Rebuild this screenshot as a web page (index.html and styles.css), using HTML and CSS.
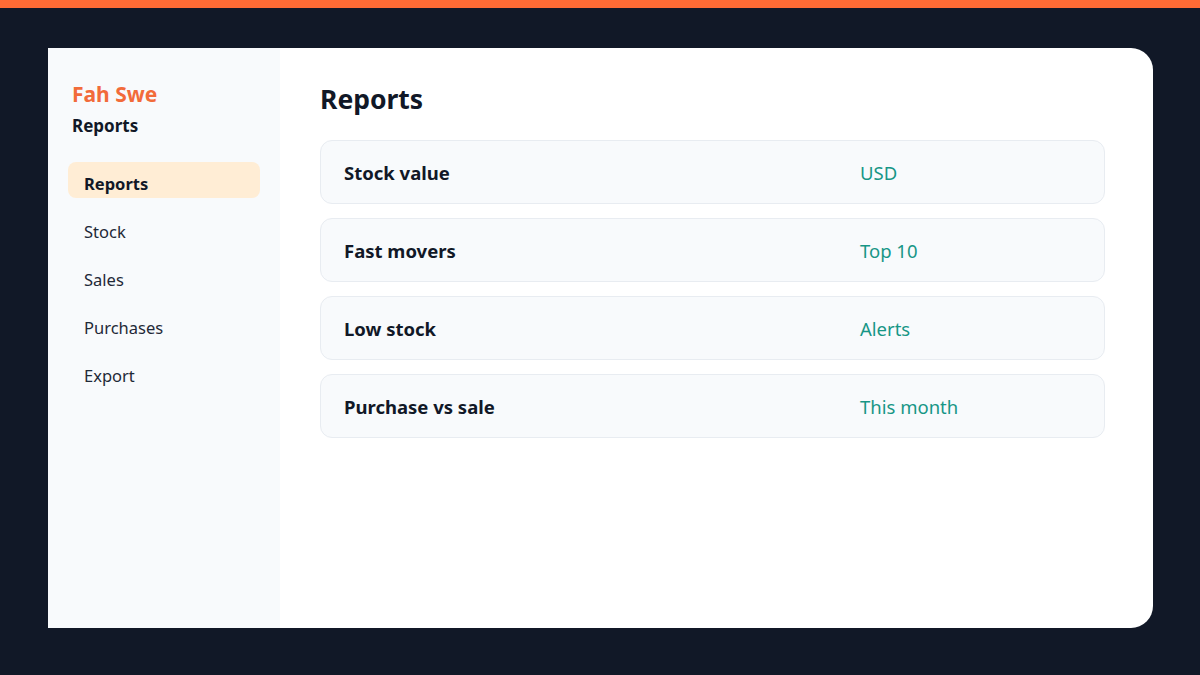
FILE: index.html
```html
<!DOCTYPE html>
<html lang="en">
<head>
    <meta charset="UTF-8">
    <meta name="viewport" content="width=device-width, initial-scale=1.0">
    <title>Reports - Fah Swe</title>
    <link rel="stylesheet" href="styles.css">
</head>
<body>
    <div class="topbar"></div>

    <div class="shell">
        <div class="app">
            <aside class="sidebar">
                <div class="brand">Fah Swe</div>
                <div class="section">Reports</div>

                <nav class="nav">
                    <a href="#" class="nav-item active">Reports</a>
                    <a href="#" class="nav-item">Stock</a>
                    <a href="#" class="nav-item">Sales</a>
                    <a href="#" class="nav-item">Purchases</a>
                    <a href="#" class="nav-item">Export</a>
                </nav>
            </aside>

            <main class="main">
                <h1>Reports</h1>

                <div class="report-list">
                    <div class="report">
                        <span class="report-name">Stock value</span>
                        <span class="report-meta">USD</span>
                    </div>
                    <div class="report">
                        <span class="report-name">Fast movers</span>
                        <span class="report-meta">Top 10</span>
                    </div>
                    <div class="report">
                        <span class="report-name">Low stock</span>
                        <span class="report-meta">Alerts</span>
                    </div>
                    <div class="report">
                        <span class="report-name">Purchase vs sale</span>
                        <span class="report-meta">This month</span>
                    </div>
                </div>
            </main>
        </div>
    </div>
</body>
</html>
```

FILE: styles.css
```css
* { box-sizing: border-box; }

html, body { height: 100%; }

body {
    margin: 0;
    background: #111827;
    font-family: "Noto Sans", "Open Sans", sans-serif;
    color: #111827;
}

.topbar {
    height: 8px;
    background: #ff6b35;
}

.shell {
    padding: 40px 47px 47px 48px;
}

.app {
    display: flex;
    height: 580px;
    background: white;
    border-radius: 0 22px 22px 0;
}

/* sidebar */
.sidebar {
    width: 232px;
    flex-shrink: 0;
    background: #f8fafc;
    padding: 30px 20px;
}
.brand {
    padding-left: 4px;
    color: #f26b3a;
    font-size: 21px;
    font-weight: 700;
    line-height: 32px;
}
.section {
    padding-left: 4px;
    padding-top: 1px;
    font-size: 17px;
    font-weight: 700;
    line-height: 30px;
}
.nav {
    display: flex;
    flex-direction: column;
    gap: 12px;
    margin-top: 21px;
}
.nav-item {
    display: block;
    height: 36px;
    line-height: 30px;
    padding: 7px 16px 0;
    border-radius: 8px;
    color: #1f2937;
    font-size: 16.5px;
    text-decoration: none;
}
.nav-item.active {
    background: #ffedd5;
    color: #111827;
    font-weight: 700;
}

/* main area */
.main {
    flex: 1;
    padding: 31px 48px 40px 40px;
}
.main h1 {
    margin: 0 0 21px;
    font-size: 26.5px;
    line-height: 40px;
    font-weight: 700;
}
.report-list {
    display: flex;
    flex-direction: column;
    gap: 14px;
}
.report {
    display: grid;
    grid-template-columns: 1fr 220px;
    align-items: center;
    height: 64px;
    padding: 1px 24px 0 23px;
    background: #f8fafc;
    border: 1px solid #e8ecf1;
    border-radius: 12px;
    font-size: 18.5px;
}
.report-name { font-weight: 700; }
.report-meta { color: #179686; }
```
